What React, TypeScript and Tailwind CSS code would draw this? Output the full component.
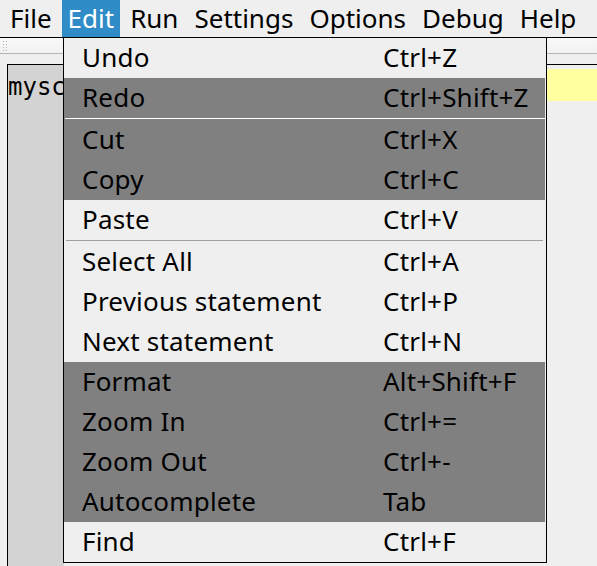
const menus = ['File', 'Edit', 'Run', 'Settings', 'Options', 'Debug', 'Help'];

type Item = { label: string; keys: string; dark?: boolean } | { sep: true; dark?: boolean };

const items: Item[] = [
  { label: 'Undo', keys: 'Ctrl+Z' },
  { label: 'Redo', keys: 'Ctrl+Shift+Z', dark: true },
  { sep: true, dark: true },
  { label: 'Cut', keys: 'Ctrl+X', dark: true },
  { label: 'Copy', keys: 'Ctrl+C', dark: true },
  { label: 'Paste', keys: 'Ctrl+V' },
  { sep: true },
  { label: 'Select All', keys: 'Ctrl+A' },
  { label: 'Previous statement', keys: 'Ctrl+P' },
  { label: 'Next statement', keys: 'Ctrl+N' },
  { label: 'Format', keys: 'Alt+Shift+F', dark: true },
  { label: 'Zoom In', keys: 'Ctrl+=', dark: true },
  { label: 'Zoom Out', keys: 'Ctrl+-', dark: true },
  { label: 'Autocomplete', keys: 'Tab', dark: true },
  { label: 'Find', keys: 'Ctrl+F' },
];

export default function App() {
  return (
    <div
      className="relative w-[597px] h-[566px] overflow-hidden bg-[#efefef] text-black"
      style={{ fontFamily: '"Noto Sans", "Open Sans", sans-serif' }}
    >
      {/* menu bar */}
      <div className="flex gap-[4px] h-[37px] pl-[4px] text-[26px] leading-none">
        {menus.map((m) => (
          <div
            key={m}
            className={
              'flex items-center px-[6px] pb-[2px] ' +
              (m === 'Edit' ? 'bg-[#308cc6] text-white' : '')
            }
          >
            {m}
          </div>
        ))}
      </div>
      <div className="h-px bg-black" />

      {/* toolbar strip */}
      <div className="h-[16px] bg-gradient-to-b from-[#f9f9f9] to-[#f1f1f1] border-b border-[#b4b4b4] flex items-center pl-[3px]">
        <div className="grid grid-cols-2 gap-x-[2px] gap-y-[2px]">
          {Array.from({ length: 8 }).map((_, i) => (
            <span key={i} className="block w-px h-px bg-[#b0b0b0]" />
          ))}
        </div>
      </div>

      {/* editor area */}
      <div className="mt-[10px] ml-[7px] h-[520px] border-l border-t border-black flex">
        <div className="w-[56px] overflow-hidden bg-[#d3d3d3] pt-[6px]">
          <div
            className="h-[32px] flex items-center text-[24px] leading-none whitespace-nowrap"
            style={{ fontFamily: '"DejaVu Sans Mono", monospace' }}
          >
            mysc
          </div>
        </div>
        <div className="flex-1 pt-[4px]">
          <div className="h-[32px] bg-[#ffffa0]" />
        </div>
      </div>

      {/* Edit dropdown */}
      <div className="absolute left-[63px] top-[37px] w-[484px] border border-black bg-[#efefef] pr-px text-[26px] leading-none tracking-[0.2px]">
        {items.map((it, i) =>
          'sep' in it ? (
            <div key={i} className={'h-[2px] ' + (it.dark ? 'bg-[#808080] pl-px' : 'pl-[2px] pr-[2px]')}>
              <div className={'h-px ' + (it.dark ? 'bg-white' : 'bg-[#a0a0a0]')} />
            </div>
          ) : (
            <div
              key={i}
              className={'flex items-center h-[40px] pl-[18px] pb-[2px] ' + (it.dark ? 'bg-[#808080]' : '')}
            >
              <span className="w-[301px] whitespace-nowrap">{it.label}</span>
              <span className="whitespace-nowrap">{it.keys}</span>
            </div>
          )
        )}
      </div>
    </div>
  );
}
